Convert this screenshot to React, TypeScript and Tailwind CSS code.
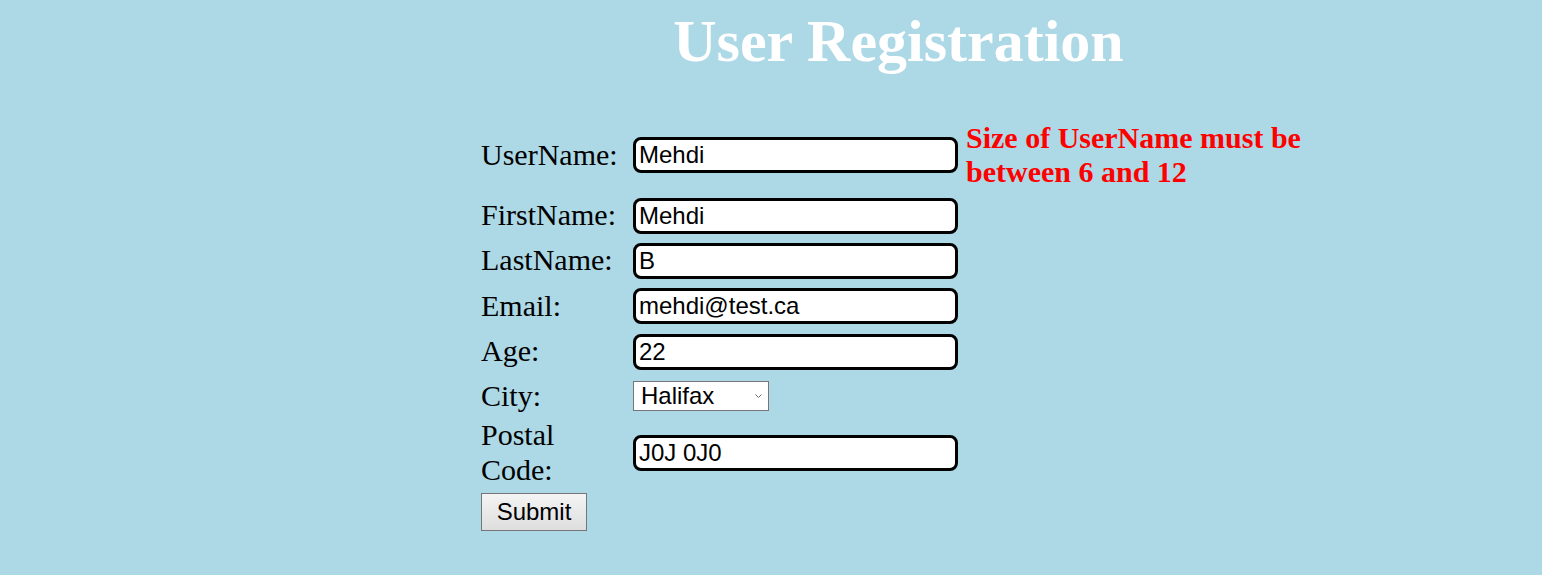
import { useState } from 'react';

const inputCls =
  "w-[325px] h-[36px] rounded-[8px] border-[3px] border-black bg-white px-[3px] font-['Liberation_Sans',Arial,sans-serif] text-[24px] text-black outline-none";

const labelCls = 'w-[152px] shrink-0 pr-[12px] text-[30px] leading-[34.5px] text-black';

export default function App() {
  const [form, setForm] = useState({
    userName: 'Mehdi',
    firstName: 'Mehdi',
    lastName: 'B',
    email: 'mehdi@test.ca',
    age: '22',
    city: 'Halifax',
    postal: 'J0J 0J0',
  });

  const set = (key: keyof typeof form) => (e: { target: { value: string } }) =>
    setForm({ ...form, [key]: e.target.value });

  return (
    <div className="h-[575px] bg-[#add8e6] font-['Liberation_Serif','Times_New_Roman',serif]">
      <h1 className="pt-[7px] pl-[255px] text-center text-[60px] font-bold leading-[69px] text-white">
        User Registration
      </h1>

      <form className="mt-[44px] pl-[481px]" onSubmit={(e) => e.preventDefault()}>
        {/* first row carries the validation message */}
        <div className="flex h-[70px] items-center">
          <label className={labelCls}>UserName:</label>
          <input className={inputCls} value={form.userName} onChange={set('userName')} />
          <p className="ml-[8px] w-[360px] text-[30px] font-bold leading-[34.5px] text-[#ff0000]">
            Size of UserName must be between 6 and 12
          </p>
        </div>

        <div className="mt-[3px] flex h-[45px] items-center">
          <label className={labelCls}>FirstName:</label>
          <input className={inputCls} value={form.firstName} onChange={set('firstName')} />
        </div>
        <div className="flex h-[45px] items-center">
          <label className={labelCls}>LastName:</label>
          <input className={inputCls} value={form.lastName} onChange={set('lastName')} />
        </div>
        <div className="flex h-[46px] items-center">
          <label className={labelCls}>Email:</label>
          <input className={inputCls} value={form.email} onChange={set('email')} />
        </div>
        <div className="flex h-[45px] items-center">
          <label className={labelCls}>Age:</label>
          <input className={inputCls} value={form.age} onChange={set('age')} />
        </div>
        <div className="flex h-[44px] items-center">
          <label className={labelCls}>City:</label>
          <div className="relative">
            <select
              className="h-[30px] w-[136px] appearance-none border border-[#767676] bg-white pl-[7px] font-['Liberation_Sans',Arial,sans-serif] text-[24px] leading-[28px] text-black outline-none"
              value={form.city}
              onChange={set('city')}
            >
              <option>Halifax</option>
              <option>Toronto</option>
              <option>Montreal</option>
              <option>Vancouver</option>
            </select>
            <svg
              className="pointer-events-none absolute right-[7px] top-[13px]"
              width="7"
              height="4"
              viewBox="0 0 7 4"
              fill="none"
            >
              <path d="M0.5 0.5L3.5 3.5L6.5 0.5" stroke="#6b6b6b" strokeWidth="1" />
            </svg>
          </div>
        </div>
        <div className="flex h-[69px] items-center">
          <label className="w-[152px] shrink-0 pr-[12px] text-[30px] leading-[34.5px] text-black">
            Postal Code:
          </label>
          <input className={inputCls} value={form.postal} onChange={set('postal')} />
        </div>

        <div className="mt-[6px]">
          <button
            type="submit"
            className="h-[38px] w-[106px] border border-[#767676] bg-gradient-to-b from-[#f4f4f4] to-[#dedede] font-['Liberation_Sans',Arial,sans-serif] text-[24px] text-black"
          >
            Submit
          </button>
        </div>
      </form>
    </div>
  );
}
